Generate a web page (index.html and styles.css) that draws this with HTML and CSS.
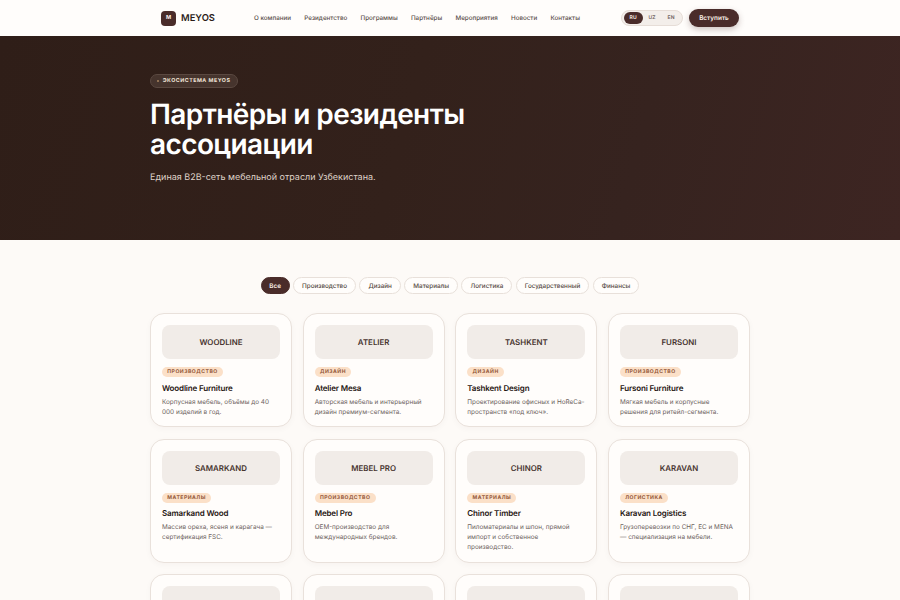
FILE: index.html
```html
<!doctype html>
<html lang="ru">
<head>
<meta charset="utf-8">
<meta name="viewport" content="width=device-width, initial-scale=1">
<title>Партнёры и резиденты — MEYOS</title>
<link rel="stylesheet" href="styles.css">
</head>

<body>
	<header class="topo">
		<div class="topo-inner">
			<a class="logo" href="#"><span class="logo-marca">M</span><span class="logo-nome">MEYOS</span></a>
			<nav class="menu">
				<a href="#">О компании</a>
				<a href="#">Резидентство</a>
				<a href="#">Программы</a>
				<a href="#">Партнёры</a>
				<a href="#">Мероприятия</a>
				<a href="#">Новости</a>
				<a href="#">Контакты</a>
			</nav>
			<div class="idiomas">
				<span class="idioma ativo">RU</span>
				<span class="idioma">UZ</span>
				<span class="idioma">EN</span>
			</div>
			<button class="botao-entrar">Вступить</button>
		</div>
	</header>

	<section class="hero">
		<div class="conteiner">
			<div class="selo"><span class="selo-ponto"></span>ЭКОСИСТЕМА MEYOS</div>
			<h1>Партнёры и резиденты<br>ассоциации</h1>
			<p class="hero-sub">Единая B2B-сеть мебельной отрасли Узбекистана.</p>
		</div>
	</section>

	<main class="conteudo">
		<div class="conteiner">
			<div class="filtros">
				<button class="filtro ativo">Все</button>
				<button class="filtro">Производство</button>
				<button class="filtro">Дизайн</button>
				<button class="filtro">Материалы</button>
				<button class="filtro">Логистика</button>
				<button class="filtro">Государственный</button>
				<button class="filtro">Финансы</button>
			</div>

			<div class="grade">
				<article class="cartao">
					<div class="cartao-logo">WOODLINE</div>
					<span class="etiqueta">ПРОИЗВОДСТВО</span>
					<h3>Woodline Furniture</h3>
					<p>Корпусная мебель, объёмы до 40 000 изделий в год.</p>
				</article>
				<article class="cartao">
					<div class="cartao-logo">ATELIER</div>
					<span class="etiqueta">ДИЗАЙН</span>
					<h3>Atelier Mesa</h3>
					<p>Авторская мебель и интерьерный дизайн премиум-сегмента.</p>
				</article>
				<article class="cartao">
					<div class="cartao-logo">TASHKENT</div>
					<span class="etiqueta">ДИЗАЙН</span>
					<h3>Tashkent Design</h3>
					<p>Проектирование офисных и HoReCa-пространств «под ключ».</p>
				</article>
				<article class="cartao">
					<div class="cartao-logo">FURSONI</div>
					<span class="etiqueta">ПРОИЗВОДСТВО</span>
					<h3>Fursoni Furniture</h3>
					<p>Мягкая мебель и корпусные решения для ритейл-сегмента.</p>
				</article>
				<article class="cartao">
					<div class="cartao-logo">SAMARKAND</div>
					<span class="etiqueta">МАТЕРИАЛЫ</span>
					<h3>Samarkand Wood</h3>
					<p>Массив ореха, ясеня и карагача — сертификация FSC.</p>
				</article>
				<article class="cartao">
					<div class="cartao-logo">MEBEL PRO</div>
					<span class="etiqueta">ПРОИЗВОДСТВО</span>
					<h3>Mebel Pro</h3>
					<p>OEM-производство для международных брендов.</p>
				</article>
				<article class="cartao">
					<div class="cartao-logo">CHINOR</div>
					<span class="etiqueta">МАТЕРИАЛЫ</span>
					<h3>Chinor Timber</h3>
					<p>Пиломатериалы и шпон, прямой импорт и собственное производство.</p>
				</article>
				<article class="cartao">
					<div class="cartao-logo">KARAVAN</div>
					<span class="etiqueta">ЛОГИСТИКА</span>
					<h3>Karavan Logistics</h3>
					<p>Грузоперевозки по СНГ, ЕС и MENA — специализация на мебели.</p>
				</article>
				<article class="cartao"><div class="cartao-logo"></div></article>
				<article class="cartao"><div class="cartao-logo"></div></article>
				<article class="cartao"><div class="cartao-logo"></div></article>
				<article class="cartao"><div class="cartao-logo"></div></article>
			</div>
		</div>
	</main>
</body>
</html>
```

FILE: styles.css
```css
*
{
	margin: 0;
	padding: 0;
	box-sizing: border-box;
}
html
{
	overflow: hidden;
}
body
{
	font-family: Inter, "Liberation Sans", Arial, sans-serif;
	background-color: #fdfaf7;
	color: #1f1512;
	text-rendering: geometricPrecision;
}
a
{
	color: inherit;
	text-decoration: none;
}
button
{
	font-family: inherit;
	text-rendering: geometricPrecision;
	cursor: pointer;
}
.conteiner
{
	width: 600px;
	margin: 0 auto;
}

/* topo */
.topo
{
	height: 36px;
	background-color: #fffdfb;
}
.topo-inner
{
	width: 578px;
	height: 100%;
	margin: 0 auto;
	display: flex;
	align-items: center;
}
.logo
{
	display: flex;
	align-items: center;
	gap: 5px;
	width: 93px;
}
.logo-marca
{
	width: 15px;
	height: 15px;
	border-radius: 4px;
	background-color: #4a2c2a;
	color: #fdf3ea;
	font-size: 5.5px;
	font-weight: 700;
	display: flex;
	align-items: center;
	justify-content: center;
}
.logo-nome
{
	font-size: 9.4px;
	font-weight: 600;
	color: #2a1b18;
}
.menu
{
	display: flex;
	gap: 13.3px;
	font-size: 6.25px;
	font-weight: 500;
	color: #5b4f4b;
	white-space: nowrap;
}
.idiomas
{
	margin-left: auto;
	display: flex;
	align-items: center;
	height: 15.7px;
	padding: 0 1.7px;
	border-radius: 8px;
	background-color: #f3eeea;
	border: 0.7px solid #e6ddd7;
}
.idioma
{
	width: 19px;
	height: 11.4px;
	border-radius: 6px;
	font-size: 5px;
	font-weight: 600;
	letter-spacing: 0.2px;
	color: #6f6460;
	display: flex;
	align-items: center;
	justify-content: center;
}
.idioma.ativo
{
	background-color: #4a2c2a;
	color: #fdf3ea;
}
.botao-entrar
{
	margin-left: 5.7px;
	width: 50px;
	height: 18.7px;
	border: none;
	border-radius: 10px;
	background-color: #4a2c2a;
	color: #fdf3ea;
	font-size: 6.4px;
	font-weight: 600;
	box-shadow: 0 2.5px 6px rgba(74, 44, 42, 0.28);
}

/* hero */
.hero
{
	height: 204px;
	padding-top: 37.5px;
	background: linear-gradient(105deg, #2f1e18 0%, #33211b 45%, #36231f 70%, #3d2522 100%);
	color: #fff;
}
.selo
{
	display: flex;
	width: fit-content;
	align-items: center;
	gap: 3.5px;
	height: 14.5px;
	padding: 0 6.5px 0 6px;
	border-radius: 8px;
	background-color: #46342d;
	border: 0.7px solid #5a4840;
	font-size: 5.3px;
	font-weight: 700;
	letter-spacing: 0.5px;
	color: #f3e6da;
}
.selo-ponto
{
	width: 2.2px;
	height: 2.2px;
	border-radius: 50%;
	background-color: #a8855f;
}
.hero h1
{
	margin-top: 10.6px;
	font-size: 28px;
	font-weight: 600;
	line-height: 30px;
	letter-spacing: -0.6px;
}
.hero-sub
{
	margin-top: 11px;
	font-size: 9px;
	line-height: 16px;
	color: #dfd2c8;
}

/* filtros */
.conteudo
{
	padding-top: 37.3px;
}
.filtros
{
	display: flex;
	justify-content: center;
	gap: 3.5px;
}
.filtro
{
	height: 17px;
	padding: 0 8px;
	border-radius: 9px;
	border: 0.7px solid #e8e0da;
	background-color: #fffdfb;
	color: #54483f;
	font-size: 6.3px;
	font-weight: 500;
}
.filtro.ativo
{
	padding: 0 7.7px;
	border-color: #4a2c2a;
	background-color: #4a2c2a;
	color: #fdf3ea;
	font-weight: 600;
}

/* cartoes */
.grade
{
	margin-top: 19px;
	display: grid;
	grid-template-columns: repeat(4, 142px);
	gap: 11.5px 10.67px;
}
.cartao
{
	padding: 11px 11px 9px;
	border-radius: 14px;
	border: 0.7px solid #e9e1db;
	background-color: #fffdfb;
	box-shadow: 0 2px 6px rgba(74, 44, 42, 0.03);
}
.cartao-logo
{
	height: 33.7px;
	border-radius: 8px;
	background-color: #f1ece8;
	color: #46332e;
	font-size: 7.9px;
	font-weight: 600;
	display: flex;
	align-items: center;
	justify-content: center;
}
.etiqueta
{
	display: block;
	width: fit-content;
	margin-top: 8px;
	padding: 0 5.3px;
	height: 10.3px;
	line-height: 10.3px;
	border-radius: 6px;
	background-color: #fbe0c8;
	color: #94583a;
	font-size: 5.1px;
	font-weight: 700;
	letter-spacing: 0.5px;
}
.cartao h3
{
	margin-top: 5.5px;
	font-size: 8px;
	line-height: 11px;
	font-weight: 600;
	letter-spacing: -0.15px;
	color: #1f1512;
}
.cartao p
{
	margin-top: 4px;
	font-size: 6.4px;
	line-height: 9.8px;
	color: #6c625d;
}
```
